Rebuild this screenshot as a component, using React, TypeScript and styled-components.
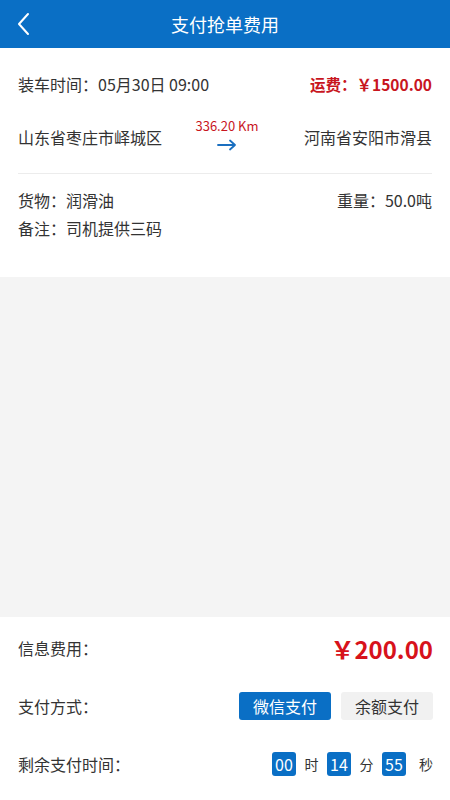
import React from "react";
import styled, { createGlobalStyle } from "styled-components";

const GlobalStyle = createGlobalStyle`
  html, body {
    margin: 0;
    padding: 0;
    height: 100%;
  }
  body {
    font-family: "Noto Sans CJK SC", "Noto Sans", sans-serif;
    color: #333;
    background: #f4f4f4;
  }
  #root {
    height: 100%;
  }
`;

const App: React.FC = () => {
  return (
    <Page>
      <GlobalStyle />
      <Header>
        <BackButton aria-label="back">
          <svg width="14" height="24" viewBox="0 0 14 24" fill="none">
            <path d="M12 2 L3 12 L12 22" stroke="#fff" strokeWidth="2" strokeLinecap="round" strokeLinejoin="round" />
          </svg>
        </BackButton>
        <Title>支付抢单费用</Title>
      </Header>

      <OrderCard>
        <Row>
          <Text>装车时间：05月30日 09:00</Text>
          <Freight>运费：￥1500.00</Freight>
        </Row>
        <RouteRow>
          <Place>山东省枣庄市峄城区</Place>
          <Distance>
            <Km>336.20 Km</Km>
            <svg width="20" height="12" viewBox="0 0 20 12" fill="none">
              <path d="M1 6 H18 M13 1.5 L18 6 L13 10.5" stroke="#1a6fc0" strokeWidth="1.8" strokeLinecap="round" strokeLinejoin="round" />
            </svg>
          </Distance>
          <Place>河南省安阳市滑县</Place>
        </RouteRow>
        <Divider />
        <GoodsRow>
          <Text>货物：润滑油</Text>
          <Text>重量：50.0吨</Text>
        </GoodsRow>
        <GoodsRow>
          <Text>备注：司机提供三码</Text>
        </GoodsRow>
      </OrderCard>

      <Spacer />

      <PayPanel>
        <PayRow>
          <Text>信息费用：</Text>
          <Amount>￥200.00</Amount>
        </PayRow>
        <PayRow>
          <Text>支付方式：</Text>
          <Methods>
            <MethodButton active>微信支付</MethodButton>
            <MethodButton>余额支付</MethodButton>
          </Methods>
        </PayRow>
        <PayRow>
          <Text>剩余支付时间：</Text>
          <Countdown>
            <TimeBox>00</TimeBox>
            <Unit>时</Unit>
            <TimeBox>14</TimeBox>
            <Unit>分</Unit>
            <TimeBox>55</TimeBox>
            <Unit>秒</Unit>
          </Countdown>
        </PayRow>
      </PayPanel>
    </Page>
  );
};

const Page = styled.div`
  height: 100%;
  display: flex;
  flex-direction: column;
`;

const Header = styled.div`
  height: 48px;
  flex-shrink: 0;
  background: #0a6fc5;
  display: flex;
  align-items: center;
  justify-content: center;
  position: relative;
`;

const BackButton = styled.div`
  position: absolute;
  left: 16px;
  top: 12px;
  display: flex;
`;

const Title = styled.div`
  color: #fff;
  font-size: 18px;
  line-height: 1;
`;

const OrderCard = styled.div`
  background: #fff;
  padding: 12px 18px 35px;
`;

const Row = styled.div`
  display: flex;
  justify-content: space-between;
  align-items: center;
  height: 48px;
`;

const Text = styled.span`
  font-size: 16px;
  color: #333;
`;

const Freight = styled.span`
  font-size: 15.5px;
  font-weight: bold;
  color: #c8161e;
`;

const RouteRow = styled.div`
  display: flex;
  justify-content: space-between;
  align-items: center;
  height: 56px;
  margin-top: 1px;
`;

const Place = styled.span`
  font-size: 16px;
  color: #333;
  width: 150px;
  &:last-child {
    text-align: right;
  }
`;

const Distance = styled.div`
  display: flex;
  flex-direction: column;
  align-items: center;
  gap: 4px;
  margin-top: -8px;
  padding-left: 4px;
`;

const Km = styled.span`
  font-size: 13px;
  color: #c8161e;
`;

const Divider = styled.div`
  height: 1px;
  background: #ececec;
  margin: 8px 0 12px;
`;

const GoodsRow = styled.div`
  display: flex;
  justify-content: space-between;
  align-items: center;
  height: 28px;
`;

const Spacer = styled.div`
  flex: 1;
  background: #f4f4f4;
`;

const PayPanel = styled.div`
  background: #fff;
  padding: 2px 17px 7px 18px;
  display: flex;
  flex-direction: column;
`;

const PayRow = styled.div`
  display: flex;
  justify-content: space-between;
  align-items: center;
  height: 58px;
`;

const Amount = styled.span`
  font-size: 24px;
  font-weight: bold;
  color: #d7121b;
`;

const Methods = styled.div`
  display: flex;
  gap: 10px;
`;

const MethodButton = styled.div<{ active?: boolean }>`
  width: 92px;
  height: 28px;
  border-radius: 3px;
  display: flex;
  align-items: center;
  justify-content: center;
  font-size: 16px;
  background: ${(p) => (p.active ? "#0a6fc5" : "#f1f1f1")};
  color: ${(p) => (p.active ? "#fff" : "#333")};
`;

const Countdown = styled.div`
  display: flex;
  align-items: center;
`;

const TimeBox = styled.span`
  width: 24px;
  height: 24px;
  border-radius: 3px;
  background: #0a6fc5;
  color: #fff;
  font-size: 16px;
  display: flex;
  align-items: center;
  justify-content: center;
`;

const Unit = styled.span`
  font-size: 14px;
  color: #333;
  width: 31px;
  text-align: center;
  &:last-child {
    width: 27px;
    text-align: right;
  }
`;

export default App;
